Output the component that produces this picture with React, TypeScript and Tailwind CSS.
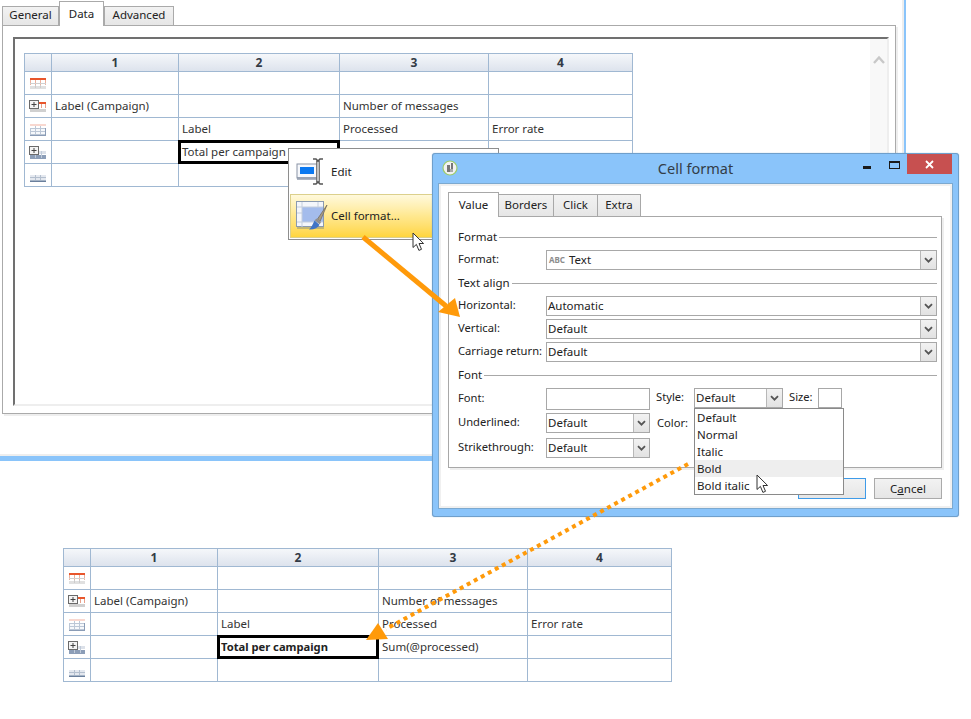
import React from "react";

const FONT = "font-['Noto_Sans',sans-serif]";

function RowIcon({ kind }: { kind: number }) {
  const grid = "#bcc7d6";
  return (
    <svg width="18" height="14" viewBox="0 0 18 14" className="block">
      {kind === 1 && (
        <g>
          <rect x="1" y="1" width="16" height="2" fill="#e8562c" />
          <path d="M1.500 3v5M6.500 3v5M11.500 3v5M16.500 3v5" stroke="#eeb09c" />
          <rect x="1" y="6" width="16" height="1" fill="#d0d0d0" />
          <rect x="1" y="9" width="16" height="3" fill="#e0e0e0" />
          <path d="M6.500 8v3M11.500 8v3" stroke="#cccccc" />
        </g>
      )}
      {kind === 2 && (
        <g>
          <rect x="9" y="2" width="8" height="2" fill="#e8562c" />
          <path d="M16.500 4v4M12.500 4v4" stroke="#e8a08a" />
          <rect x="1" y="9" width="16" height="3" fill="#d0d0d0" />
          <rect x="0.500" y="0.500" width="9" height="8" fill="#f4f4f4" stroke="#6a6a6a" />
          <path d="M2.500 4.500h5M5 2v5" stroke="#444" />
        </g>
      )}
      {kind === 3 && (
        <g>
          <rect x="1" y="1" width="16" height="2" fill="#f8d8d0" />
          <rect x="1.500" y="5.500" width="15" height="6" fill="#f6f8fb" stroke={grid} />
          <path d="M6.500 3v9M11.500 3v9M1 8.500h16" stroke={grid} />
          <path d="M16.500 5v8M1 12.500h16" stroke="#8a9cb6" />
        </g>
      )}
      {kind === 4 && (
        <g>
          <rect x="9" y="5" width="8" height="3" fill="#dce1e9" />
          <rect x="1" y="9" width="16" height="4" fill="#8c9eb8" />
          <path d="M6.500 9v3M12.500 5v7" stroke="#c0cbda" />
          <rect x="0.500" y="0.500" width="9" height="8" fill="#f4f4f4" stroke="#6a6a6a" />
          <path d="M2.500 4.500h5M5 2v5" stroke="#444" />
        </g>
      )}
      {kind === 5 && (
        <g>
          <rect x="1" y="6" width="16" height="7" fill="#e4e8ef" />
          <path d="M1 8.500h16M6.500 6v6M11.500 6v6" stroke="#b4bfce" />
          <rect x="1" y="12" width="16" height="1" fill="#6a7f9c" />
          <rect x="1" y="11" width="16" height="1" fill="#a6b4c6" />
        </g>
      )}
    </svg>
  );
}

function Cell({ children, selected, bold }: { children?: React.ReactNode; selected?: boolean; bold?: boolean }) {
  const base = "flex items-center overflow-hidden whitespace-nowrap";
  if (selected) {
    return (
      <div
        className={`${base} relative z-[1] -ml-px -mt-px border-[3px] border-black bg-white pl-[1px] ${
          bold ? "text-[11.2px] font-bold text-[#222222]" : "text-[#333333]"
        }`}
      >
        {children}
      </div>
    );
  }
  return <div className={`${base} border-r border-b border-[#a0b8d2] pl-[3px] text-[#333333]`}>{children}</div>;
}

function Head({ children }: { children?: React.ReactNode }) {
  return (
    <div className="flex items-center justify-center border-r border-b border-[#a0b8d2] bg-gradient-to-b from-[#f5f7fa] to-[#dde3ed] text-[12px] font-bold text-[#333a45]">
      {children}
    </div>
  );
}

function IconCell({ kind }: { kind: number }) {
  return (
    <div className="flex items-center justify-center border-r border-b border-[#a0b8d2] pt-[1px]">
      <RowIcon kind={kind} />
    </div>
  );
}

function DataTable({ bold }: { bold?: boolean }) {
  return (
    <div className="grid w-[609px] grid-cols-[27px_127px_161px_149px_144px] grid-rows-[18px_23px_23px_23px_23px_23px] border-l border-t border-[#a0b8d2] text-[11.5px]">
      <Head />
      <Head>1</Head>
      <Head>2</Head>
      <Head>3</Head>
      <Head>4</Head>

      <IconCell kind={1} />
      <Cell />
      <Cell />
      <Cell />
      <Cell />

      <IconCell kind={2} />
      <Cell>Label (Campaign)</Cell>
      <Cell />
      <Cell>Number of messages</Cell>
      <Cell />

      <IconCell kind={3} />
      <Cell />
      <Cell>Label</Cell>
      <Cell>Processed</Cell>
      <Cell>Error rate</Cell>

      <IconCell kind={4} />
      <Cell />
      <Cell selected bold={bold}>
        Total per campaign
      </Cell>
      <Cell>Sum(@processed)</Cell>
      <Cell />

      <IconCell kind={5} />
      <Cell />
      <Cell />
      <Cell />
      <Cell />
    </div>
  );
}

function Chevron() {
  return (
    <svg width="9" height="7" viewBox="0 0 9 7" className="block">
      <path d="M1 1.200l3.500 3.500L8 1.200" fill="none" stroke="#555" strokeWidth="1.800" />
    </svg>
  );
}

function Select({ value, className = "", prefix }: { value: string; className?: string; prefix?: boolean }) {
  return (
    <div className={`flex h-[20px] items-stretch border border-[#a8a8a8] bg-white ${className}`}>
      <div className="flex min-w-0 flex-1 items-center gap-[4px] pl-[1px] text-[#222222]">
        {prefix && <span className="pl-[1px] text-[8px] font-bold text-[#8c8c8c]">ABC</span>}
        <span>{value}</span>
      </div>
      <div className="flex w-[16px] items-center justify-center border-l border-[#b8b8b8] bg-gradient-to-b from-[#f2f2f2] to-[#e2e2e2]">
        <Chevron />
      </div>
    </div>
  );
}

function Group({ label }: { label: string }) {
  return (
    <div className="flex h-[14px] items-center gap-[2px] text-[#222222]">
      <span className="whitespace-nowrap">{label}</span>
      <div className="h-px flex-1 bg-[#a8a8a8]" />
    </div>
  );
}

function FormRow({ label, children, className = "" }: { label: string; children: React.ReactNode; className?: string }) {
  return (
    <div className={`flex items-center ${className}`}>
      <span className="w-[88px] shrink-0 -translate-y-px whitespace-nowrap text-[11.2px] text-[#222222]">{label}</span>
      {children}
    </div>
  );
}

function Cursor({ className }: { className: string }) {
  return (
    <svg width="14" height="20" viewBox="0 0 14 20" className={className}>
      <path
        d="M1 1v14.500l3.400-3.100 2.500 6 2.600-1.100-2.500-5.800h4.600z"
        fill="#fff"
        stroke="#333"
        strokeWidth="1"
        strokeLinejoin="round"
      />
    </svg>
  );
}

function EditIcon() {
  return (
    <svg width="30" height="28" viewBox="0 0 30 28" className="block">
      <rect x="1" y="6" width="22" height="14" fill="#f6f8fc" stroke="#8a94a6" />
      <rect x="1" y="19" width="23" height="3" fill="#8a94a6" opacity="0.7" />
      <rect x="4" y="9" width="14" height="7" fill="#0a78f0" />
      <rect x="20.500" y="3" width="3" height="21" fill="#c0c0c0" stroke="#666" strokeWidth="0.800" />
      <path d="M17 1h3l2 2 2-2h3M17 26h3l2-2 2 2h3" fill="none" stroke="#555" strokeWidth="1.600" />
    </svg>
  );
}

function CellFormatIcon() {
  return (
    <svg width="32" height="32" viewBox="0 0 32 32" className="block">
      <rect x="0.500" y="1.500" width="27" height="25" fill="#f4f6fb" stroke="#8a9ab0" />
      <rect x="6" y="7" width="21" height="15" fill="#a4bcec" />
      <path d="M6 2v25M1 7h26M1 22h26M22 2v5M1 13h5" stroke="#c4cedd" />
      <rect x="1" y="27" width="27" height="2" fill="#8a8f80" opacity="0.5" />
      <path d="M31 5L21.500 19l2.500 2.500z" fill="#a89c84" stroke="#6c6458" strokeWidth="0.700" />
      <path d="M20.500 18.500l4.500 4-1.500 1.800-4.800-4z" fill="#8e8e8e" />
      <path d="M18.500 20.500l5 4.200c-1.500 3-5 5-10.500 4.800 2.500-2 4-5.500 5.500-9z" fill="#3f74c6" />
    </svg>
  );
}

function AppIcon() {
  return (
    <svg width="16" height="16" viewBox="0 0 16 16" className="block">
      <circle cx="8" cy="8" r="7" fill="#f2f2f2" stroke="#9ccb6a" strokeWidth="1.200" />
      <path d="M5 5h3v7H5zM9 3h2v6H9z" fill="#777" />
      <path d="M8 9h3v3H8z" fill="#aaa" />
    </svg>
  );
}

export default function App() {
  return (
    <div className={`relative h-[719px] w-[971px] overflow-hidden bg-white text-[11.5px] ${FONT}`}>
      {/* Back window */}
      <div className="absolute left-0 top-0 z-0 h-[461px] w-[906px] border-r-2 border-b-[5px] border-[#8ac4fa] bg-white">
        <div className="h-full w-full border-r-2 border-b-2 border-[#eeeeee] pl-[2px]">
          <div className="relative z-10 flex h-[25px] items-end text-[#222222]">
            <div className="flex h-[19px] w-[57px] items-center justify-center border border-b-0 border-[#aaaaaa] bg-gradient-to-b from-[#f2f2f2] to-[#e6e6e6] pb-[3px]">
              General
            </div>
            <div className="flex h-[25px] w-[45px] translate-y-[1px] items-center justify-center border border-b-0 border-[#aaaaaa] bg-white">
              Data
            </div>
            <div className="flex h-[19px] w-[70px] items-center justify-center border border-b-0 border-[#aaaaaa] bg-gradient-to-b from-[#f2f2f2] to-[#e6e6e6] pb-[3px]">
              Advanced
            </div>
          </div>
          <div className="h-[389px] w-[894px] border border-[#aaaaaa] pl-[10px] pt-[11px] shadow-[2px_2px_0_#eeeeee]">
            <div className="flex h-[369px] w-[876px] justify-between border-2 border-t-[#707070] border-l-[#707070] border-r-[#eeeeee] border-b-[#eeeeee] bg-white">
              <div className="ml-[9px] mt-[14px]">
                <DataTable />
              </div>
              <div className="flex w-[17px] justify-center bg-[#f8f8f8] pt-[16px]">
                <svg width="12" height="10" viewBox="0 0 12 10" className="block">
                  <path d="M1 8l5-5.500L11 8" fill="none" stroke="#c8c8c8" strokeWidth="2.400" />
                </svg>
              </div>
            </div>
          </div>
        </div>
      </div>

      {/* Context menu */}
      <div className="absolute left-[288px] top-[148px] z-0 flex h-[92px] w-[211px] flex-col border border-[#8e8e8e] bg-white p-[1px] text-[#222222]">
        <div className="flex h-[44px] items-center gap-[5px] pl-[6px]">
          <EditIcon />
          <span>Edit</span>
        </div>
        <div className="flex h-[44px] items-center gap-[3px] border border-[#dcd08c] bg-gradient-to-b from-[#fff9dc] via-[#ffe88f] via-50% to-[#ffd53a] pl-[5px]">
          <CellFormatIcon />
          <span>Cell format...</span>
        </div>
      </div>

      {/* Cell format dialog */}
      <div className="absolute left-[432px] top-[153px] z-0 flex h-[364px] w-[527px] flex-col rounded-[3px] border border-[#6f9fcb] bg-[#8ac4fa] shadow-[0_0_1px_#6f9fcb]">
        <div className="relative flex h-[29px] shrink-0 items-center justify-center">
          <div className="absolute left-[9px] top-[6px]">
            <AppIcon />
          </div>
          <span className="text-[14.500px] text-[#333d47]">Cell format</span>
          <div className="absolute right-[6px] top-0 flex items-start">
            <div className="mr-[18px] mt-[12px] h-[3px] w-[8px] bg-[#1a1a1a]" />
            <div className="mr-[7px] mt-[7px] h-[8px] w-[11px] border border-t-2 border-[#1a1a1a]" />
            <div className="flex h-[20px] w-[45px] items-center justify-center bg-[#c75050]">
              <svg width="9" height="9" viewBox="0 0 9 9" className="block">
                <path d="M1 1l7 7M8 1L1 8" stroke="#fff" strokeWidth="1.800" />
              </svg>
            </div>
          </div>
        </div>
        <div className="relative mx-[5px] mb-[7px] flex-1 border border-[#7ca9cf] bg-white">
          <div className="h-full w-full border-2 border-[#f0f0f0] pl-[7px] pt-[6px]">
            <div className="relative z-10 flex h-[24px] items-end text-[#222222]">
              <div className="flex h-[25px] w-[51px] translate-y-[1px] items-center justify-center border border-b-0 border-[#a8a8a8] bg-white pb-[1px]">
                Value
              </div>
              <div className="flex h-[22px] w-[55px] items-center justify-center border border-l-0 border-b-0 border-[#a8a8a8] bg-gradient-to-b from-[#f2f2f2] to-[#e6e6e6] pb-[1px]">
                Borders
              </div>
              <div className="flex h-[22px] w-[44px] items-center justify-center border border-l-0 border-b-0 border-[#a8a8a8] bg-gradient-to-b from-[#f2f2f2] to-[#e6e6e6] pb-[1px]">
                Click
              </div>
              <div className="flex h-[22px] w-[43px] items-center justify-center border border-l-0 border-b-0 border-[#a8a8a8] bg-gradient-to-b from-[#f2f2f2] to-[#e6e6e6] pb-[1px]">
                Extra
              </div>
            </div>
            <div className="h-[252px] w-[494px] border border-[#a8a8a8] pl-[9px] pr-[4px] pt-[13px] shadow-[2px_2px_0_#eeeeee]">
              <Group label="Format" />
              <FormRow label="Format:" className="mt-[6px]">
                <Select value="Text" prefix className="flex-1" />
              </FormRow>
              <div className="mt-[6px]">
                <Group label="Text align" />
              </div>
              <FormRow label="Horizontal:" className="mt-[6px]">
                <Select value="Automatic" className="flex-1" />
              </FormRow>
              <FormRow label="Vertical:" className="mt-[3px]">
                <Select value="Default" className="flex-1" />
              </FormRow>
              <FormRow label="Carriage return:" className="mt-[3px]">
                <Select value="Default" className="flex-1" />
              </FormRow>
              <div className="mt-[6px]">
                <Group label="Font" />
              </div>
              <FormRow label="Font:" className="mt-[6px] h-[22px]">
                <div className="h-[22px] w-[104px] border border-[#a8a8a8] bg-white" />
                <span className="ml-[6px] mt-[1px] w-[38px] self-start text-[11.2px] text-[#222222]">Style:</span>
                <Select value="Default" className="w-[89px] self-start" />
                <span className="ml-[6px] mt-[1px] w-[29px] self-start text-[11.2px] text-[#222222]">Size:</span>
                <div className="h-[20px] w-[24px] self-start border border-[#a8a8a8] bg-white" />
              </FormRow>
              <FormRow label="Underlined:" className="mt-[3px]">
                <Select value="Default" className="w-[104px]" />
                <span className="ml-[7px] text-[11.2px] text-[#222222]">Color:</span>
              </FormRow>
              <FormRow label="Strikethrough:" className="mt-[5px]">
                <Select value="Default" className="w-[104px]" />
              </FormRow>
            </div>
            <div className="mt-[10px] flex w-[494px] justify-end gap-[8px] text-[#222222]">
              <div className="flex h-[21px] w-[68px] items-center justify-center border border-[#3f9be8] bg-gradient-to-b from-[#f2f2f2] to-[#e6e6e6]">
                OK
              </div>
              <div className="flex h-[21px] w-[68px] items-center justify-center border border-[#aaaaaa] bg-gradient-to-b from-[#f2f2f2] to-[#e6e6e6]">
                C<span className="underline">a</span>ncel
              </div>
            </div>
          </div>
        </div>
      </div>

      {/* Open dropdown list */}
      <div className="absolute left-[694px] top-[408px] z-0 h-[87px] w-[150px] border border-[#8a8a8a] bg-white text-[#222222]">
        {["Default", "Normal", "Italic", "Bold", "Bold italic"].map((item) => (
          <div key={item} className={`flex h-[17px] items-center pl-[2px] ${item === "Bold" ? "bg-[#eeeeee]" : ""}`}>
            {item}
          </div>
        ))}
      </div>

      {/* Result table */}
      <div className="absolute left-[63px] top-[548px] z-0 bg-white">
        <DataTable bold />
      </div>

      {/* Annotation arrows and cursors */}
      <svg width="971" height="719" viewBox="0 0 971 719" className="pointer-events-none absolute left-0 top-0 z-0">
        <path d="M363 237L446 306" stroke="#ff9a0a" strokeWidth="5" fill="none" />
        <path d="M438 312L455 298L460 317Z" fill="#ff9a0a" />
        <path d="M688 464L386 629" stroke="#ff9a0a" strokeWidth="4" strokeDasharray="4 4" fill="none" />
        <path d="M378 623L366 640L388 639Z" fill="#ff9a0a" />
      </svg>
      <Cursor className="absolute left-[412px] top-[232px] z-0" />
      <Cursor className="absolute left-[756px] top-[474px] z-0" />
    </div>
  );
}
